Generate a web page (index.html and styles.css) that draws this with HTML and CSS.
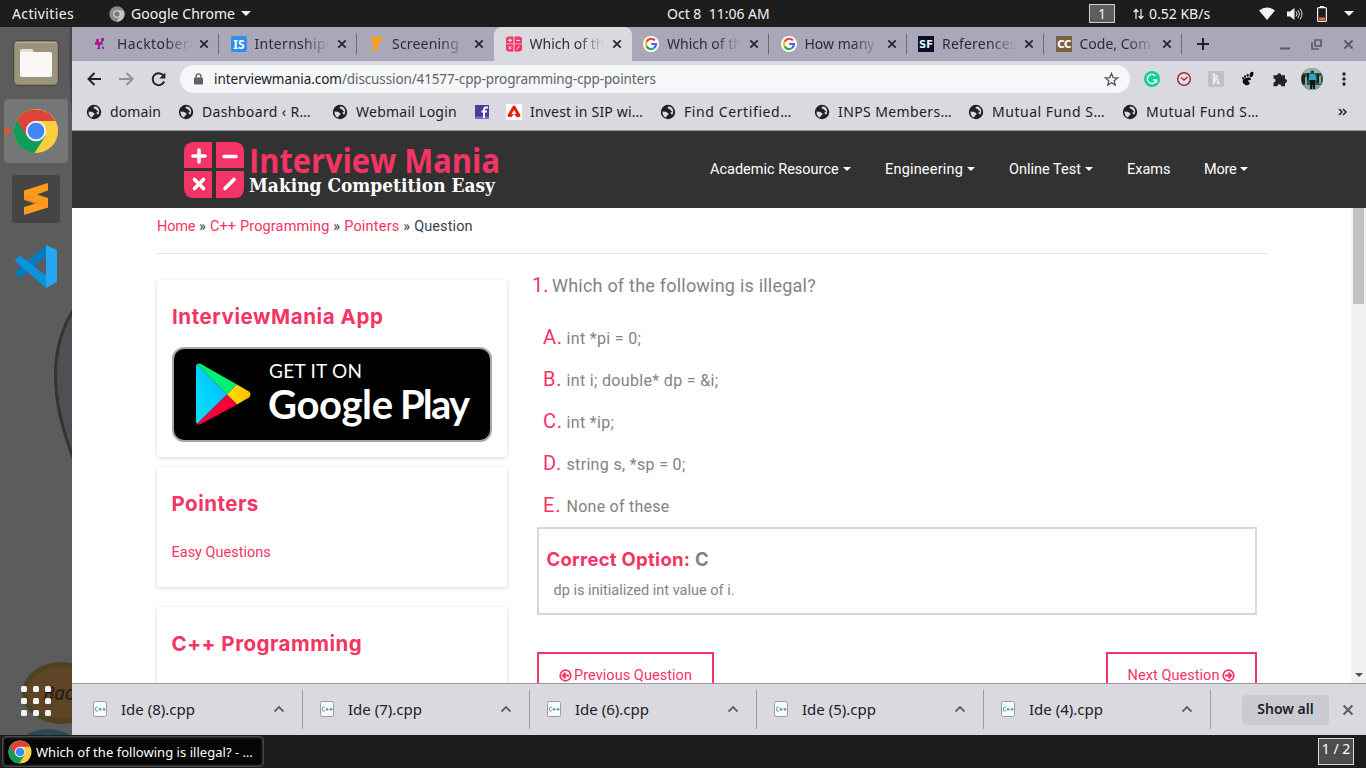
FILE: index.html
```html
<!DOCTYPE html>
<html lang="en">
<head>
<meta charset="utf-8">
<title>Which of the following is illegal?</title>
<link rel="stylesheet" href="styles.css">
</head>
<body>
<svg class="defs" width="0" height="0">
  <symbol id="globe" viewBox="0 0 16 16"><circle cx="8" cy="8" r="7.2" fill="#202124"/><path d="M2.600 7.200C4 8.400 5.500 7.200 6.600 8.300c1 1 2.200.7 1.900 1.900-.3 1.100-1.700 1-1.900 2.300-.100.9-.9 1-1.600.7C3.300 12.200 2.300 9.800 2.600 7.200zM8.800 2.600c-1.400.5-1.600 1.400-.8 2 .9.700 2.100.4 2.400 1.400.3.900 1.700.7 1.500 1.800-.2.900-1.500.7-2.200 1.200 1.600.2 1.500 1.700 2.600 1.600 1.800-2.600 1-7.600-3.500-8z" fill="#dad9df"/></symbol>
  <symbol id="close" viewBox="0 0 10 10"><path d="M1.300 1.300l7.400 7.400M8.700 1.300L1.300 8.700" stroke="currentColor" stroke-width="1.800" fill="none"/></symbol>
  <symbol id="google" viewBox="0 0 16 16"><circle cx="8" cy="8" r="8" fill="#fff"/><g fill="none" stroke-width="2.200"><path d="M11.900 4.500A5 5 0 0 0 3.500 5.800" stroke="#ea4335"/><path d="M3.500 5.800A5 5 0 0 0 3.500 10.200" stroke="#fbbc05"/><path d="M3.500 10.200A5 5 0 0 0 10.800 12.200" stroke="#34a853"/><path d="M10.800 12.200A5 5 0 0 0 13 8H8.200" stroke="#4a63f4"/></g></symbol>
  <symbol id="chrome" viewBox="0 0 48 48"><circle cx="24" cy="24" r="23" fill="#ffcd40"/><path d="M24 24L4.100 12.500A23 23 0 0 0 22.500 47L34 29z" fill="#0f9d58"/><path d="M4.100 12.500A23 23 0 0 1 44 13.500H24L14 29z" fill="#db4437"/><circle cx="24" cy="24" r="10.700" fill="#f1f1f1"/><circle cx="24" cy="24" r="8.700" fill="#4285f4"/></symbol>
  <symbol id="calc" viewBox="0 0 60 56"><path d="M10 0h18v26H0V10Q0 0 10 0zM32 0h18q10 0 10 10v16H32zM0 29h28v27H10Q0 56 0 46zM32 29h28v17q0 10-10 10H32z" fill="#f43465"/><g stroke="#fff" stroke-width="3.600" stroke-linecap="round"><path d="M9 14h12M15 8v12M40 14.500h12M10.500 37.500l9 9M19.500 37.500l-9 9M41 46.500l9-9"/></g></symbol>
  <symbol id="cpp" viewBox="0 0 14 16"><rect x=".5" y=".5" width="13" height="15" rx="1.800" fill="#fafafa" stroke="#9b9b9d"/><path d="M4.700 6.300H3.500Q2.500 6.300 2.500 7.500v1.300q0 1.200 1 1.200h1.200M5.500 8.300h3M7 6.800v3M9.500 8.300h3M11 6.800v3" stroke="#2d9a98" fill="none"/></symbol>
  <symbol id="chev" viewBox="0 0 12 8"><path d="M1.500 6.500L6 2l4.500 4.500" stroke="#5f6064" stroke-width="1.800" fill="none"/></symbol>
</svg>

<header class="topbar">
  <span class="activities">Activities</span>
  <span class="app"><svg width="16" height="16" viewBox="0 0 48 48"><circle cx="24" cy="24" r="23" fill="#8b8b8b"/><path d="M44 13.500H24L34 29 23 47A23 23 0 0 0 44 13.500z" fill="#c4c4c4"/><circle cx="24" cy="24" r="11" fill="#ddd"/><circle cx="24" cy="24" r="8" fill="#777"/></svg><span>Google Chrome</span><i class="tri"></i></span>
  <span class="clock">Oct 8&nbsp; 11:06 AM</span>
  <span class="tray">
    <span class="ws">1</span>
    <svg class="arrows" width="11" height="12" viewBox="0 0 11 12"><path d="M3 11V1.500M.7 4L3 1.500 5.300 4M8 1v9.500M5.700 8L8 10.500 10.300 8" stroke="#eee" stroke-width="1.200" fill="none"/></svg>
    <span class="speed">0.52 KB/s</span>
    <svg class="wifi" width="16" height="13" viewBox="0 0 16 13"><path d="M0 3.500Q8-2.500 16 3.500L8 13z" fill="#f2f2f2"/></svg>
    <svg class="vol" width="16" height="14" viewBox="0 0 16 14"><path d="M0 4.500h3L7.500 1v12L3 9.500H0z" fill="#f2f2f2"/><path d="M9 4.500q2 2.500 0 5M11 3q3 4 0 8M13 1.500q4 5.500 0 11" stroke="#ddd" fill="none"/></svg>
    <svg class="bat" width="10" height="16" viewBox="0 0 10 16"><path d="M3 0h4v2H3z" fill="#f2f2f2"/><rect x=".6" y="1.600" width="8.800" height="13.800" rx="1" stroke="#f2f2f2" stroke-width="1.200" fill="none"/><path d="M2 11.500h6V14H2z" fill="#ef6c2f"/></svg>
    <i class="tri"></i>
  </span>
</header>

<div class="desk">
  <aside class="dock">
    <svg class="wall" width="72" height="708" viewBox="0 27 72 708">
      <path d="M74 309Q37 366 74 460z" fill="#4f4f55" stroke="#343434" stroke-width="3"/>
      <path d="M70 27h2v90q-4-40-2-90z" fill="#484848"/>
      <ellipse cx="62" cy="693" rx="40" ry="31" fill="#4e431f"/><ellipse cx="63" cy="693" rx="36" ry="26" fill="#5f4425"/>
      <text x="43" y="700" class="bac">Bac</text>
      <ellipse cx="48" cy="752" rx="32" ry="23" fill="#2b4a59"/>
    </svg>
    <svg class="ico-files" width="46" height="46" viewBox="0 0 46 46"><rect x=".7" y=".7" width="44.600" height="44.600" rx="4.500" fill="#9c937d" stroke="#45433e"/><path d="M2 2h42v1H2z" fill="#b8b09d"/><path d="M7 13V11q0-2 2-2h9q1.500 0 2.500 2l1 2z" fill="#e3dfd6"/><rect x="7" y="12" width="32" height="25" rx="2" fill="#faf9f8"/></svg>
    <div class="ico-chrome"><i></i><svg width="46" height="46"><use href="#chrome"/></svg></div>
    <div class="ico-sub"><svg width="24" height="32" viewBox="0 0 24 32"><path d="M0 14l24 7v3.500L10 20.500 0 17z" fill="#e0801b"/><path d="M0 7.500L24 0v7.500L13 11.500 24 15v7.500L0 16z" fill="#ff9a20"/><path d="M24 20v4.500L0 32v-8l11-3.600L24 15z" fill="#ff9a20"/></svg></div>
    <svg class="ico-code" width="43" height="43" viewBox="0 0 43 43"><path d="M0 27L31 0v12L5 33l-5-3.500z" fill="#0879bd"/><path d="M0 15l5-4.500 26 20V43L0 16z" fill="#0893dc"/><path d="M31 0l11 5v32l-11 6z" fill="#24a7f2"/></svg>
    <svg class="ico-grid" width="30" height="30" viewBox="0 0 30 30" fill="#f3f3f3"><rect width="6" height="6" rx="1.500"/><rect x="12" width="6" height="6" rx="1.500"/><rect x="24" width="6" height="6" rx="1.500"/><rect y="12" width="6" height="6" rx="1.500"/><rect x="12" y="12" width="6" height="6" rx="1.500"/><rect x="24" y="12" width="6" height="6" rx="1.500"/><rect y="24" width="6" height="6" rx="1.500"/><rect x="12" y="24" width="6" height="6" rx="1.500"/><rect x="24" y="24" width="6" height="6" rx="1.500"/></svg>
  </aside>

  <main class="window">
    <div class="tabs">
      <div class="tab"><svg class="fav" viewBox="0 0 16 16"><path d="M3 3h3v3h2V2h3v11H9V9H7v4H4V9H2V6h1z" fill="#b51c8c"/><path d="M10 5l4-1-3 4 2 2-4 1zM2 11l3-2v3z" fill="#7ab9dc"/></svg><span class="tt s-hack">Hacktoberf</span><svg class="x"><use href="#close"/></svg></div>
      <div class="tab"><svg class="fav" viewBox="0 0 16 16"><rect width="16" height="16" rx="2" fill="#2e90ee"/><text x="8" y="12.500" class="is">IS</text></svg><span class="tt s-int">Internships</span><svg class="x"><use href="#close"/></svg></div>
      <div class="tab nosep"><svg class="fav" viewBox="0 0 16 16"><path d="M4 1h11l-1 4H11L8.500 14.500H4L6.500 5H2z" fill="#ff9d0a"/></svg><span class="tt s-scr">Screening T</span><svg class="x"><use href="#close"/></svg></div>
      <div class="tab active"><svg class="fav" viewBox="0 0 16 16"><use href="#calc"/></svg><span class="tt">Which of th</span><svg class="x"><use href="#close"/></svg></div>
      <div class="tab"><svg class="fav"><use href="#google"/></svg><span class="tt">Which of th</span><svg class="x"><use href="#close"/></svg></div>
      <div class="tab"><svg class="fav"><use href="#google"/></svg><span class="tt">How many</span><svg class="x"><use href="#close"/></svg></div>
      <div class="tab"><svg class="fav" viewBox="0 0 16 16"><path d="M0 0h16v16H0z" fill="#071127"/><text x="8" y="12" class="sf">SF</text></svg><span class="tt s-scr">References</span><svg class="x"><use href="#close"/></svg></div>
      <div class="tab"><svg class="fav" viewBox="0 0 16 16"><path d="M0 0h16v16H0z" fill="#79603f"/><text x="8" y="11.500" class="cc">CC</text></svg><span class="tt">Code, Com</span><svg class="x"><use href="#close"/></svg></div>
      <svg class="plus" width="12" height="12" viewBox="0 0 12 12"><path d="M6 0v12M0 6h12" stroke="#222" stroke-width="2"/></svg>
      <div class="winbtns">
        <svg width="10" height="12" viewBox="0 0 10 12"><path d="M0 10.500h10" stroke="#5d5c63" stroke-width="2"/></svg>
        <svg width="11" height="11" viewBox="0 0 11 11"><path d="M4 1h6v6H4zM1 3v7h7" stroke="#5d5c63" stroke-width="1.700" fill="none"/></svg>
        <svg width="11" height="11" class="wx"><use href="#close"/></svg>
      </div>
    </div>

    <div class="toolbar">
      <svg width="15" height="14" viewBox="0 0 15 14"><path d="M14 7H2M7.500 1L1.500 7l6 6" stroke="#222" stroke-width="2" fill="none"/></svg>
      <svg class="fwd" width="15" height="14" viewBox="0 0 15 14"><path d="M0 7h13M7.500 1l6 6-6 6" stroke="#929197" stroke-width="2" fill="none"/></svg>
      <svg class="reload" width="15" height="15" viewBox="0 0 15 15"><path d="M12.400 3.500A6 6 0 1 0 13.200 9.500" stroke="#222" stroke-width="2" fill="none"/><path d="M14.300 .5v6h-6z" fill="#222"/></svg>
      <div class="pill">
        <svg width="9" height="12" viewBox="0 0 9 12"><rect y="4.500" width="9" height="7" rx="1" fill="#5f6368"/><path d="M2.200 5V3q0-2.200 2.300-2.200T6.800 3v2" stroke="#5f6368" stroke-width="1.300" fill="none"/></svg>
        <span class="url"><b>interviewmania.com</b><span>/discussion/41577-cpp-programming-cpp-pointers</span></span>
        <svg class="star" width="15" height="15" viewBox="0 0 15 15"><path d="M7.500 1.500l1.700 4.100 4.400.3-3.400 2.900 1.100 4.300-3.800-2.300-3.800 2.300 1.100-4.300L1.400 5.900l4.400-.3z" stroke="#505357" stroke-width="1.300" fill="none"/></svg>
      </div>
      <div class="exts">
        <svg viewBox="0 0 16 16"><circle cx="8" cy="8" r="8" fill="#14cf9c"/><path d="M11.300 4.700A4.600 4.600 0 1 0 12.500 9H9M12.500 9v2.800" stroke="#fff" stroke-width="1.400" fill="none"/></svg>
        <svg viewBox="0 0 16 16"><circle cx="8" cy="8" r="6.300" stroke="#a3303a" stroke-width="1.600" fill="#e3dfe4"/><path d="M5 6.500l3 2.500 3.500-3" stroke="#a3303a" stroke-width="1.400" fill="none"/></svg>
        <svg viewBox="0 0 16 16"><rect width="16" height="16" rx="2" fill="#c1c0c1"/><path d="M4.500 4.500Q7 1 6.500 5L5.500 13Q7.500 7 9.500 8q1 1 0 4 .5 1 2-.5M4.500 7.500Q9 7 9.500 4" stroke="#f4f4f4" stroke-width="1.400" fill="none"/></svg>
        <svg viewBox="0 0 16 16"><path d="M3 9c2-3 8-3 8-1 0 1.500-3 1-3.200 2-.2 1 2.200.6 2 2-.3 2.200-2.800 2.800-4.500 2C3.500 13 2 11 3 9z" fill="#111"/><ellipse cx="11.500" cy="3.500" rx="1.800" ry="2.800" transform="rotate(20 11.500 3.500)"/><ellipse cx="7.700" cy="4.300" rx="1" ry="1.500"/><ellipse cx="5" cy="5.500" rx="1" ry="1.300"/><ellipse cx="3" cy="7.200" rx=".9" ry="1.100"/></svg>
        <svg viewBox="0 0 16 16"><path d="M1.500 4.200h3.700a2 2 0 1 1 4 0H13v3.700a2 2 0 1 1 0 4v3.300H9.300a2 2 0 0 0-4 0H1.500v-3.600a2 2 0 0 0 0-4z" fill="#222"/></svg>
      </div>
      <svg class="avatar" width="22" height="22" viewBox="0 0 22 22"><clipPath id="av"><circle cx="11" cy="11" r="11"/></clipPath><g clip-path="url(#av)"><path d="M0 0h22v22H0z" fill="#35534c"/><path d="M0 0h22v5H0z" fill="#91b9aa"/><path d="M1 7h3v9H1zM6 5h2v7H6zM16 6h2v9h-2z" fill="#16231f"/><path d="M4 9h2v8H4zM18 8h2v8h-2zM0 17h22v5H0z" fill="#80a99b"/><path d="M8.500 6h5.500l1.500 6h-8z" fill="#2fa4b5"/><path d="M9 12h5v9h-2l-.5-6-.5 6H9z" fill="#101722"/><circle cx="11.300" cy="4" r="1.800" fill="#4c332c"/></g></svg>
      <svg class="dots" width="4" height="14" viewBox="0 0 4 14" fill="#222"><circle cx="2" cy="2" r="1.700"/><circle cx="2" cy="7" r="1.700"/><circle cx="2" cy="12" r="1.700"/></svg>
    </div>

    <div class="bookmarks">
      <span class="bm w92 b-dom"><svg><use href="#globe"/></svg>domain</span>
      <span class="bm w154 b-dash"><svg><use href="#globe"/></svg>Dashboard ‹ R…</span>
      <span class="bm w142 b-web"><svg><use href="#globe"/></svg>Webmail Login</span>
      <span class="bm w32"><svg viewBox="0 0 16 16"><path d="M1 1h14v14H1z" fill="#443e9c"/><path d="M1 12.500h14V15H1z" fill="#7571ba"/><path d="M14 3.500h-2q-2 0-2 2.500v8M7.500 7.500H13" stroke="#fff" stroke-width="2" fill="none"/></svg></span>
      <span class="bm w154 b-inv"><svg viewBox="0 0 16 16"><path d="M0 0h16v16H0z" fill="#fff"/><path d="M8 3L3 11.500h10z" fill="none" stroke="#ea1f0d" stroke-width="3" stroke-linejoin="round"/><path d="M4.500 14l3.500-4 3.500 4z" fill="#fff"/></svg>Invest in SIP wi…</span>
      <span class="bm w154 b-find"><svg><use href="#globe"/></svg>Find Certified…</span>
      <span class="bm w154 b-inps"><svg><use href="#globe"/></svg>INPS Members…</span>
      <span class="bm w154 b-mut"><svg><use href="#globe"/></svg>Mutual Fund S…</span>
      <span class="bm w154 b-mut"><svg><use href="#globe"/></svg>Mutual Fund S…</span>
      <svg class="more" width="9" height="8" viewBox="0 0 9 8"><path d="M1 1l3 3-3 3M5 1l3 3-3 3" stroke="#222" stroke-width="1.500" fill="none"/></svg>
    </div>

    <div class="sitehead">
      <svg class="logo" width="320" height="62" viewBox="0 0 320 62">
        <svg width="60" height="56" y="3"><use href="#calc"/></svg>
        <text x="65" y="33.500" class="l1" textLength="251" lengthAdjust="spacingAndGlyphs">Interview Mania</text>
        <text x="65" y="53" class="l2" textLength="246" lengthAdjust="spacingAndGlyphs">Making Competition Easy</text>
      </svg>
      <nav class="nav">
        <a class="n1">Academic Resource<i></i></a><a class="n2">Engineering<i></i></a><a class="n3">Online Test<i></i></a><a class="n4">Exams</a><a class="n5">More<i></i></a>
      </nav>
    </div>

    <div class="view">
      <div class="page">
        <div class="crumbs"><a>Home</a> <span>»</span> <a class="c2">C++ Programming</a> <span>»</span> <a class="c3">Pointers</a> <span>»</span> <span class="c4">Question</span></div>
        <div class="cols">
          <div class="left">
            <section class="card first">
              <h2>InterviewMania App</h2>
              <svg class="badge" width="320" height="95" viewBox="0 0 320 95">
                <rect x="1" y="1" width="318" height="93" rx="11" fill="#000" stroke="#a6a6a6" stroke-width="2"/>
                <defs><linearGradient id="pb" x1="1" y1="0" x2="0" y2="1"><stop offset="0" stop-color="#2aa5ff"/><stop offset=".5" stop-color="#00d0ff"/><stop offset="1" stop-color="#10e0f0"/></linearGradient><linearGradient id="py"><stop offset="0" stop-color="#ffdf00"/><stop offset="1" stop-color="#ffc000"/></linearGradient></defs>
                <path d="M24 20q0-2 1-3L55 47.500 25 77q-1-1-1-3z" fill="url(#pb)"/>
                <path d="M25 17q2-1 4 0L65 37.500 55 47.500z" fill="#00f076"/>
                <path d="M65 37.500l12 7q3 3 0 6l-12 7-10-10z" fill="url(#py)"/>
                <path d="M25 77q2 1 4 0l36-19.500-10-10z" fill="#f6003d"/>
                <text x="97" y="31" class="g1" textLength="93">GET IT ON</text>
                <text x="96" y="72" class="g2" textLength="125">Google</text>
                <text x="228" y="72" class="g2" textLength="70">Play</text>
              </svg>
            </section>
            <section class="card second"><h2 class="h-ptr">Pointers</h2><a>Easy Questions</a></section>
            <section class="card third"><h2 class="h-cpp">C++ Programming</h2></section>
          </div>
          <div class="right">
            <div class="q"><b>1.</b><span>Which of the following is illegal?</span></div>
            <div class="opts">
              <div><b>A.</b><span>int *pi = 0;</span></div>
              <div><b>B.</b><span>int i; double* dp = &amp;i;</span></div>
              <div><b>C.</b><span>int *ip;</span></div>
              <div><b>D.</b><span>string s, *sp = 0;</span></div>
              <div><b>E.</b><span class="tight">None of these</span></div>
            </div>
            <div class="answer"><h3>Correct Option: <em>C</em></h3><p>dp is initialized int value of i.</p></div>
            <div class="pager">
              <a><svg width="13" height="13" viewBox="0 0 13 13"><circle cx="6.500" cy="6.500" r="5.300" stroke="#f43465" stroke-width="1.700" fill="none"/><path d="M10 6.500H4M6.500 3.700L3.700 6.500l2.800 2.800" stroke="#f43465" stroke-width="1.800" fill="none"/></svg>Previous Question</a>
              <a>Next Question<svg width="13" height="13" viewBox="0 0 13 13"><circle cx="6.500" cy="6.500" r="5.300" stroke="#f43465" stroke-width="1.700" fill="none"/><path d="M3 6.500h6M6.500 3.700l2.800 2.800-2.800 2.800" stroke="#f43465" stroke-width="1.800" fill="none"/></svg></a>
            </div>
          </div>
        </div>
      </div>
      <div class="scroll"><div class="thumb"></div><i></i></div>
    </div>

    <div class="downloads">
      <div class="dl"><svg class="fi"><use href="#cpp"/></svg><span>Ide (8).cpp</span><svg class="ch"><use href="#chev"/></svg></div>
      <div class="dl"><svg class="fi"><use href="#cpp"/></svg><span>Ide (7).cpp</span><svg class="ch"><use href="#chev"/></svg></div>
      <div class="dl"><svg class="fi"><use href="#cpp"/></svg><span>Ide (6).cpp</span><svg class="ch"><use href="#chev"/></svg></div>
      <div class="dl"><svg class="fi"><use href="#cpp"/></svg><span>Ide (5).cpp</span><svg class="ch"><use href="#chev"/></svg></div>
      <div class="dl"><svg class="fi"><use href="#cpp"/></svg><span>Ide (4).cpp</span><svg class="ch"><use href="#chev"/></svg></div>
      <div class="showall">Show all</div>
      <svg class="dx"><use href="#close"/></svg>
    </div>
  </main>
</div>

<footer class="taskbar">
  <div class="task"><svg width="24" height="24"><use href="#chrome"/></svg><span>Which of the following is illegal? - …</span></div>
  <div class="pages">1 / 2</div>
</footer>
</body>
</html>
```
FILE: styles.css
```css
* { box-sizing: border-box; }
body { margin: 0; width: 1366px; height: 768px; overflow: hidden; display: flex; flex-direction: column; background: #1d1d1d; font: 14px/20px "Noto Sans", sans-serif; color: #202124; white-space: nowrap; }
svg { display: block; flex: none; }
.defs { position: absolute; }
.tri { width: 0; height: 0; border: 5px solid transparent; border-top-color: #f2f2f2; border-bottom: 0; }

/* top panel */
.topbar { height: 27px; flex: none; display: flex; align-items: center; color: #f2f2f2; }
.activities { width: 97px; margin-left: 12px; letter-spacing: .37px; }
.app { width: 558px; display: flex; align-items: center; gap: 6px; letter-spacing: .05px; }
.clock { width: 422px; }
.tray { display: flex; align-items: center; }
.ws { width: 26px; height: 19px; border: 1px solid #cfcfcf; background: #5d5d5d; text-align: center; line-height: 18px; }
.arrows { margin: 0 5px 0 18px; }
.speed { width: 110px; }
.wifi { margin-right: 12px; }
.vol { margin-right: 14px; }
.bat { margin-right: 17px; }

.desk { height: 708px; flex: none; display: flex; }

/* launcher */
.dock { width: 72px; position: relative; background: #5c5c5c; display: flex; flex-direction: column; align-items: center; padding-top: 13px; }
.wall { position: absolute; left: 0; top: 0; }
.bac { font: italic 500 19px "Noto Sans", sans-serif; fill: #262019; letter-spacing: -.5px; }
.ico-files { position: relative; margin-bottom: 13px; }
.ico-chrome { position: relative; width: 64px; height: 64px; border-radius: 4px; background: #757777; display: grid; place-items: center; margin-bottom: 12px; }
.ico-chrome i { position: absolute; left: 0; top: 29px; width: 6px; height: 6px; border-radius: 50%; background: #e95420; }
.ico-sub { position: relative; width: 48px; height: 48px; border-radius: 3px; background: #454545; display: grid; place-items: center; margin-bottom: 22px; }
.ico-code { position: relative; }
.ico-grid { position: relative; margin-top: auto; margin-bottom: 19px; }

/* browser chrome */
.window { flex: 1; display: flex; flex-direction: column; background: #dad9df; min-width: 0; }
.tabs { height: 34px; flex: none; display: flex; align-items: center; padding-left: 9.5px; background: #a9a7b8; }
.tab { width: 137.5px; flex: none; height: 34px; display: flex; align-items: center; padding-left: 11.5px; position: relative; color: #2d2d33; }
.tab::after { content: ""; position: absolute; right: 0; top: 7px; width: 1px; height: 20px; background: #6c6b76; }
.nosep::after, .active::after { display: none; }
.active { background: #dad9df; border-radius: 8px 8px 0 0; z-index: 1; }
.fav { width: 16px; height: 16px; margin-right: 8px; }
.tt { width: 74px; overflow: hidden; -webkit-mask-image: linear-gradient(90deg, #000 65%, transparent); mask-image: linear-gradient(90deg, #000 65%, transparent); }
.s-hack { letter-spacing: .42px; }
.s-int { letter-spacing: .3px; }
.s-scr { letter-spacing: .2px; }
.x { width: 10px; height: 10px; margin-left: 8px; color: #27272c; }
.is { font: 700 12px "Noto Sans", sans-serif; fill: #fff; text-anchor: middle; }
.sf { font: 700 10px "DejaVu Sans", sans-serif; fill: #e2f4fa; text-anchor: middle; }
.cc { font: 700 10px "DejaVu Sans", sans-serif; fill: #fff; text-anchor: middle; letter-spacing: -.5px; }
.plus { margin-left: 15.500px; }
.winbtns { display: flex; align-items: center; gap: 21px; margin-left: auto; margin-right: 12px; color: #5d5c63; }

.toolbar { height: 36px; flex: none; display: flex; align-items: center; padding-left: 15px; }
.fwd { margin-left: 17px; }
.reload { margin-left: 17px; }
.pill { width: 950px; height: 28px; border-radius: 14px; background: #f5f7f9; margin-left: 14px; display: flex; align-items: center; padding: 0 11px 0 14px; }
.url { margin-left: 11px; font-size: 13.5px; color: #5f6368; }
.url b { font-weight: 400; color: #202124; letter-spacing: -.04px; }
.url span { letter-spacing: -.12px; }
.star { margin-left: auto; }
.exts { display: flex; gap: 16px; margin-left: 14px; }
.exts svg { width: 16px; height: 16px; }
.avatar { margin-left: 13px; }
.dots { margin-left: 19px; }

.bookmarks { height: 34px; flex: none; display: flex; align-items: center; padding: 0 0 4px 14px; border-bottom: 1px solid #94979b; }
.bm { display: flex; align-items: center; gap: 8px; }
.bm svg { width: 16px; height: 16px; }
.w92 { width: 92px; } .w154 { width: 154px; } .w142 { width: 142px; } .w32 { width: 32px; }
.b-dom { letter-spacing: .12px; }
.b-dash { letter-spacing: .36px; }
.b-web { letter-spacing: .25px; }
.b-inv { letter-spacing: .18px; }
.b-find { letter-spacing: .6px; }
.b-inps { letter-spacing: .39px; }
.b-mut { letter-spacing: .52px; }
.more { margin-left: 62px; }

/* site */
.sitehead { height: 77px; flex: none; background: #323232; display: flex; align-items: center; padding-left: 112px; font-family: Roboto, sans-serif; }
.l1 { font: 700 34px "Open Sans", sans-serif; fill: #f43465; }
.l2 { font: 700 18.500px "DejaVu Serif", serif; fill: #fff; }
.nav { display: flex; margin-left: 206px; color: #fff; font-size: 14.5px; }
.nav a { display: flex; align-items: center; }
.nav i { margin-left: 4px; border: 4px solid transparent; border-top-color: #fff; border-bottom: 0; margin-top: -2px; }
.n1 { width: 175px; } .n2 { width: 124px; letter-spacing: .19px; } .n3 { width: 118px; } .n4 { width: 77px; } .n5 { letter-spacing: -.25px; }

.view { height: 475px; flex: none; display: flex; background: #fff; overflow: hidden; font-family: Roboto, sans-serif; font-size: 14.5px; }
.page { width: 1279px; padding: 0 84px 0 85px; }
.page a, .page h2, .page b { color: #f43465; }
.crumbs { height: 46px; padding-top: 9px; border-bottom: 1px solid #e3e4e5; color: #3b4147; display: flex; gap: 3.900px; letter-spacing: .1px; }
.crumbs a:first-child { letter-spacing: -.2px; }
.c2 { letter-spacing: .14px; }
.c3 { letter-spacing: .2px; }
.cols { display: flex; }
.left { width: 350px; padding-top: 26px; flex: none; }
.card { background: #fff; box-shadow: 0 1px 4px rgba(0,0,0,.15); padding: 25px 15px 0 14.500px; }
.card h2 { margin: 0; font: 700 20.500px/24px Inter, sans-serif; letter-spacing: .57px; }
.card .h-ptr { letter-spacing: .5px; }
.card .h-cpp { letter-spacing: .5px; }
.first { height: 177px; margin-bottom: 10px; padding-left: 15px; }
.badge { margin-top: 18px; }
.g1 { font: 400 19px Lato, sans-serif; fill: #fff; }
.g2 { font: 700 40px Lato, sans-serif; fill: #fff; }
.second { height: 120px; margin-bottom: 20px; }
.second a { display: block; margin-top: 27px; }
.third { height: 120px; }

.right { width: 724px; margin-left: 26px; padding-top: 18px; color: #838383; }
.right b { font-weight: 400; font-size: 20px; }
.q { display: flex; align-items: baseline; height: 44px; line-height: 26px; font-size: 18px; }
.q b { width: 19px; margin-left: -1px; margin-right: 1px; }
.q span { letter-spacing: .22px; }
.opts div { display: flex; align-items: baseline; height: 42px; line-height: 42px; font-size: 16px; letter-spacing: .33px; padding-left: 10px; }
.opts b { width: 23.500px; letter-spacing: .8px; }
.opts .tight { letter-spacing: .25px; }
.answer { width: 720px; height: 88px; margin: 1px 0 0 4px; border: 2px solid #ded3d7; padding: 18px 8px 0 7.500px; }
.answer h3 { margin: 0; font: 700 18.500px/24px Inter, sans-serif; letter-spacing: .28px; color: #f43465; }
.answer em { font-style: normal; color: #838383; }
.answer p { margin: 10px 0 0 7px; }
.pager { width: 720px; margin: 37px 0 0 4px; display: flex; justify-content: space-between; }
.pager a { height: 47px; border: 2px solid #f43465; padding: 1px 20px 0 19.500px; display: flex; align-items: center; gap: 2.500px; letter-spacing: .05px; }
.pager svg { margin-top: -1px; }
.pager a + a { padding-left: 20px; }

.scroll { width: 15px; background: #f1f1f1; display: flex; flex-direction: column; align-items: center; }
.thumb { width: 11px; height: 96px; background: #c1c1c1; }
.scroll i { margin-top: auto; margin-bottom: 6px; border: 4px solid transparent; border-top: 4px solid #505050; border-bottom: 0; }

.downloads { height: 52px; flex: none; border-top: 1px solid #97979c; display: flex; align-items: center; padding-left: 4px; }
.dl { width: 227px; height: 39px; display: flex; align-items: center; padding-left: 17px; border-right: 1px solid #9d9ca3; font-size: 15px; }
.dl span { margin-top: -2px; }
.fi { width: 14px; height: 16px; margin: -1px 14px 0 0; }
.ch { width: 12px; height: 8px; margin-left: auto; margin-right: 17px; margin-top: -2px; }
.showall { width: 87px; height: 30px; margin-left: 31px; border-radius: 4px; background: #cbcad1; font-weight: 600; text-align: center; line-height: 28px; }
.dx { width: 12px; height: 12px; margin-left: 13px; color: #5d5e62; }

/* bottom panel */
.taskbar { height: 33px; flex: none; display: flex; align-items: center; justify-content: space-between; padding: 0 12px 0 2px; color: #fff; font-size: 13px; }
.task { width: 262px; height: 31px; border: 1px solid #4a4a4a; border-radius: 4px; background: #060606; box-shadow: inset 0 0 3px #666; display: flex; align-items: center; padding-left: 5px; gap: 4px; letter-spacing: .03px; }
.pages { width: 36px; height: 27px; border: 1px solid #d8d8d8; background: #4d4d4d; text-align: center; line-height: 20px; font-size: 14px; margin-bottom: 1px; }
```
